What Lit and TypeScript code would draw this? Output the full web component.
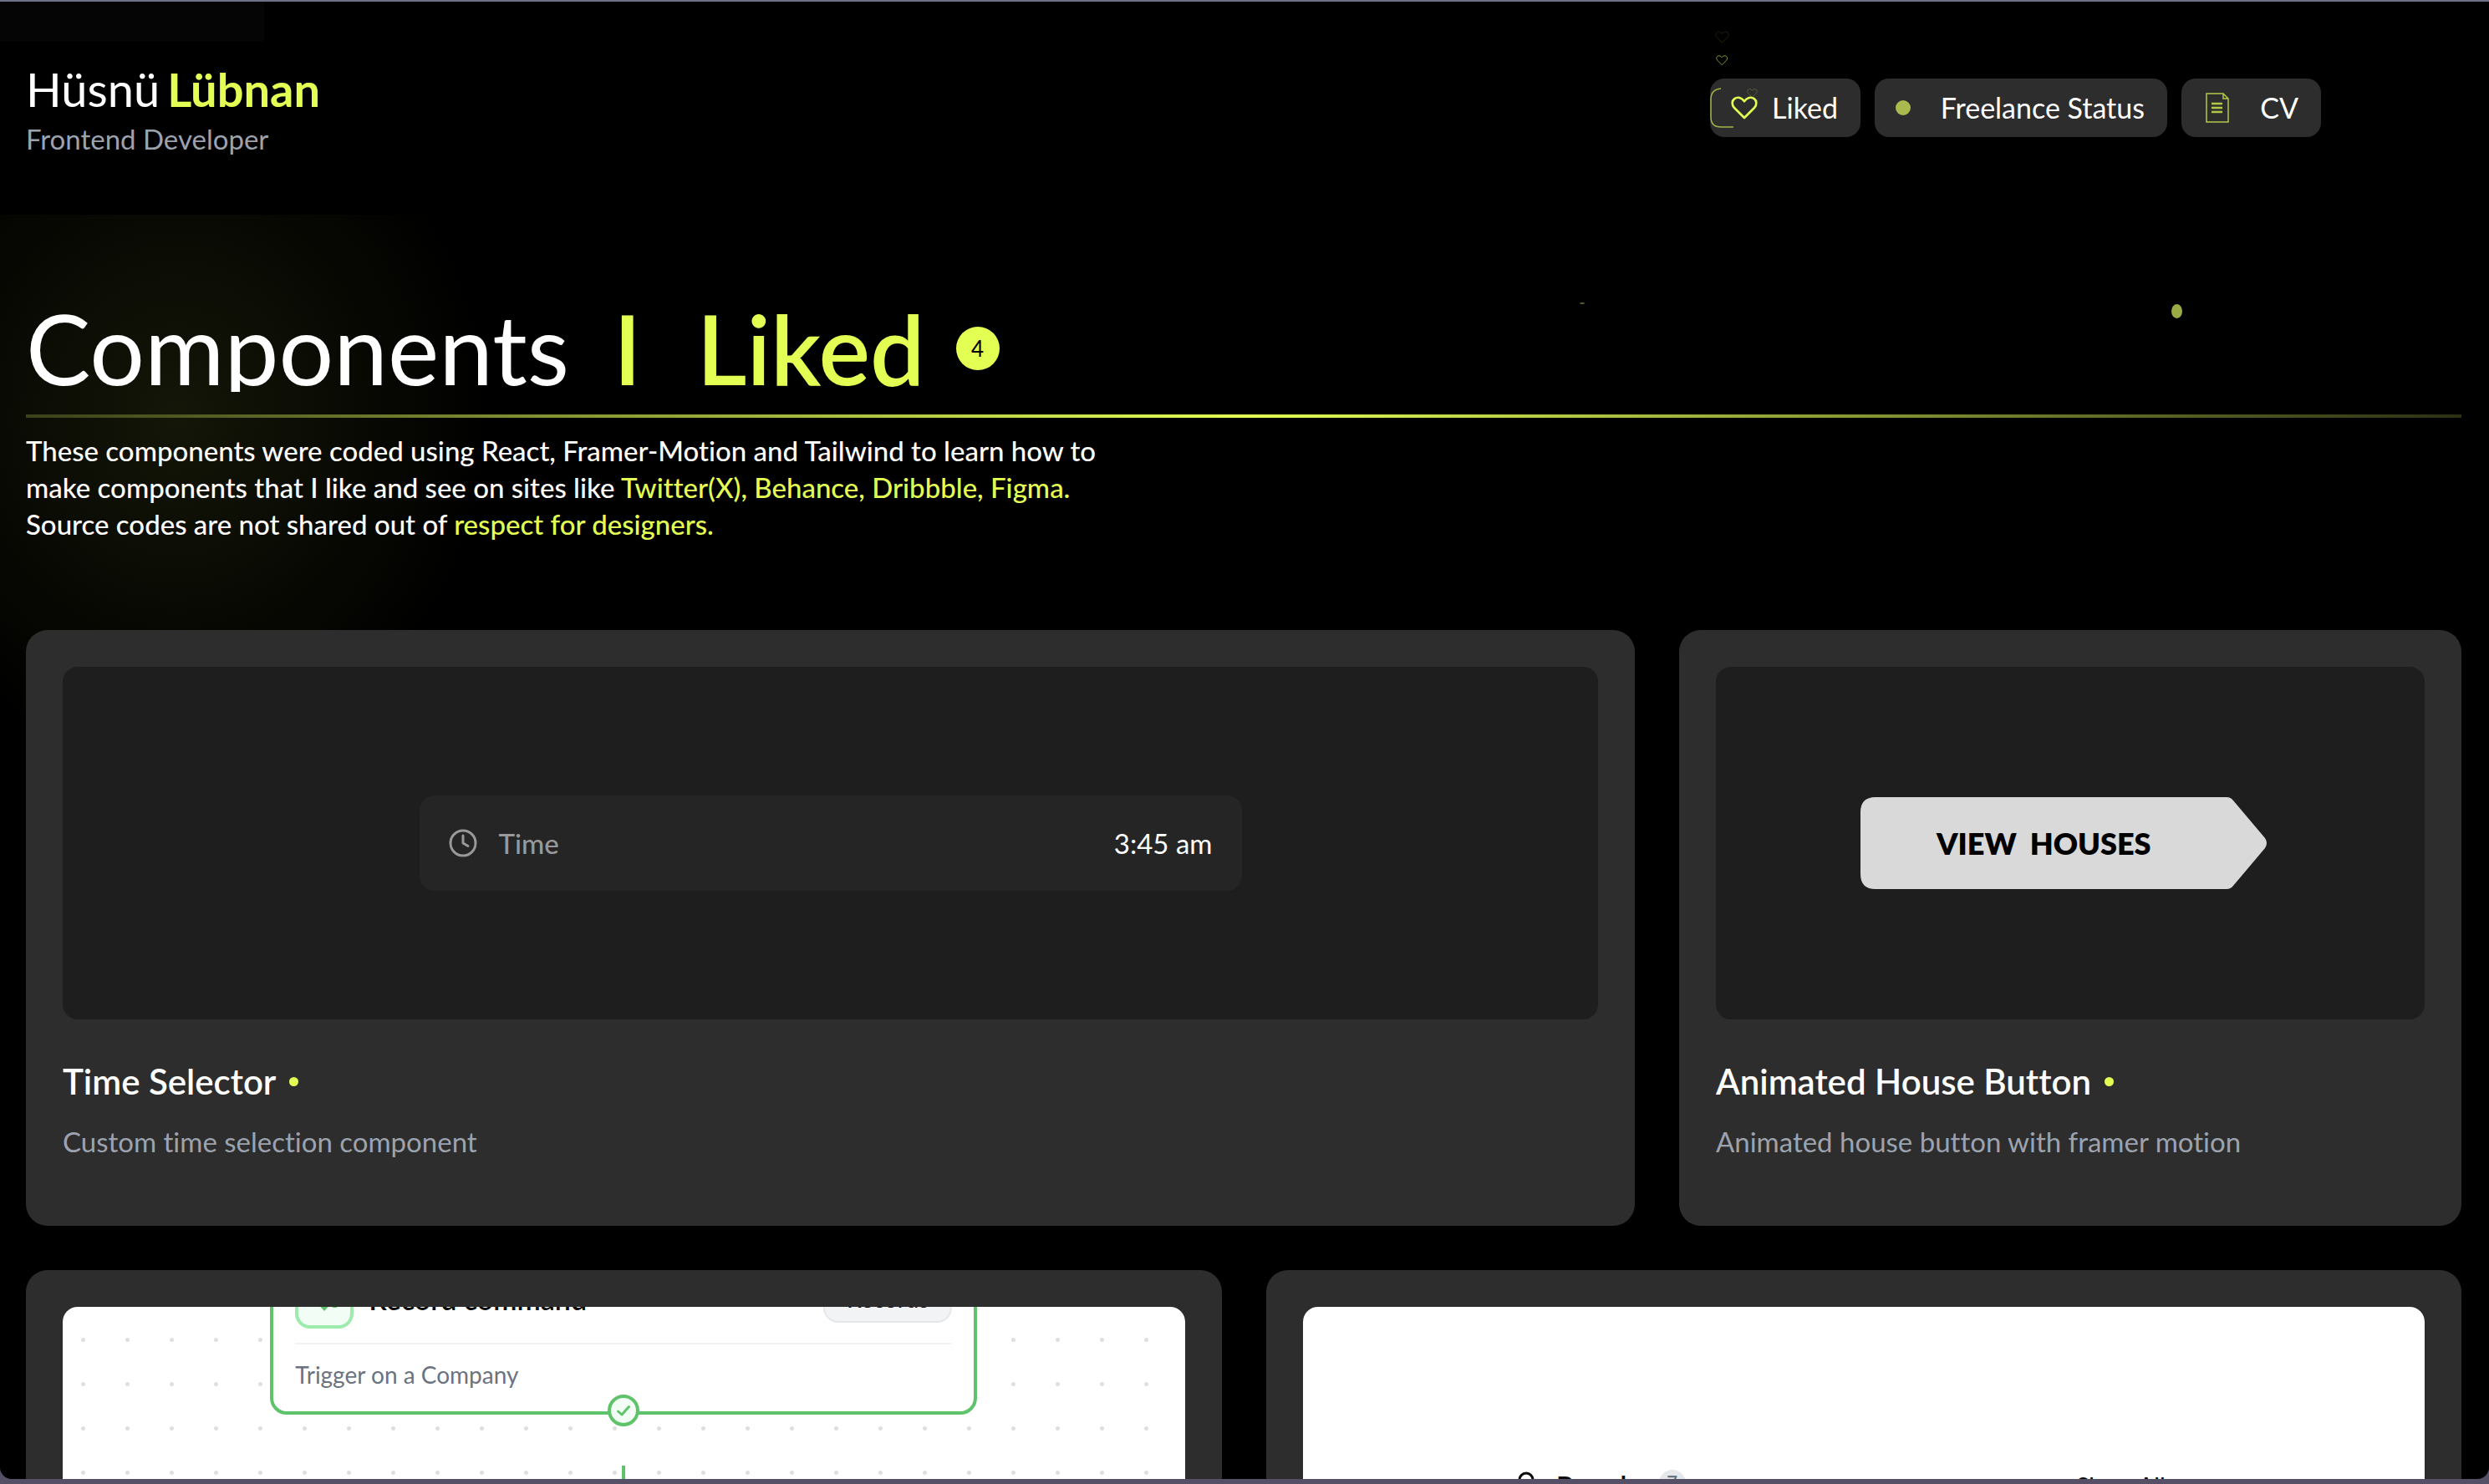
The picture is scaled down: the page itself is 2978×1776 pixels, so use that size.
import { LitElement, html, css, svg } from "lit";
import { customElement, property } from "lit/decorators.js";

const heart = svg`<path d="M12 21 L3 12 C0.5 9.300 0.800 5.600 3.200 3.900 C6 1.900 9.600 2.800 12 6.200 C14.400 2.800 18 1.900 20.800 3.900 C23.200 5.600 23.500 9.300 21 12 Z" />`;

@customElement("project-card")
class ProjectCard extends LitElement {
  @property() name = "";
  @property() summary = "";
  @property({ type: Boolean, reflect: true }) light = false;

  static styles = css`
    :host {
      display: block;
      box-sizing: border-box;
      padding: 44px;
      border-radius: 26px;
      background: #2d2d2d;
      color: #fff;
    }
    .preview {
      height: 422px;
      display: flex;
      flex-direction: column;
      align-items: center;
      justify-content: center;
      overflow: hidden;
      border-radius: 18px;
      background: #1e1e1e;
    }
    :host([light]) .preview {
      justify-content: flex-start;
      background: #fff;
    }
    .title {
      display: flex;
      align-items: center;
      gap: 16px;
      margin: 48px 0 0;
      font-size: 42px;
      line-height: 52px;
      font-weight: 600;
    }
    .dot {
      width: 11px;
      height: 11px;
      border-radius: 50%;
      background: #e4ff54;
    }
    .summary {
      margin: 26px 0 0;
      font-size: 33px;
      line-height: 40px;
      color: #9ca3af;
    }
    .body {
      padding-bottom: 37px;
    }
  `;

  render() {
    return html`
      <div class="preview"><slot></slot></div>
      <div class="body">
        <h2 class="title">${this.name}<span class="dot"></span></h2>
        <p class="summary">${this.summary}</p>
      </div>
    `;
  }
}

@customElement("time-field")
class TimeField extends LitElement {
  static styles = css`
    :host {
      display: block;
      width: 984px;
      max-width: 100%;
    }
    .field {
      display: flex;
      align-items: center;
      gap: 26px;
      width: 100%;
      height: 114px;
      padding: 0 35px;
      border: 0;
      border-radius: 18px;
      background: #252525;
      color: #999;
      font: inherit;
      font-size: 33px;
      text-align: left;
    }
    .clock {
      width: 34px;
      height: 34px;
      fill: none;
      stroke: currentColor;
      stroke-width: 3;
      stroke-linecap: round;
      stroke-linejoin: round;
    }
    .label {
      flex: 1;
      font-weight: 500;
    }
    .value {
      color: #fff;
    }
  `;

  render() {
    return html`
      <button class="field" type="button">
        <svg class="clock" viewBox="0 0 34 34" aria-hidden="true">
          <circle cx="17" cy="17" r="15" />
          <path d="M17 8 V17 L23 20.500" />
        </svg>
        <span class="label">Time</span>
        <span class="value">3:45 am</span>
      </button>
    `;
  }
}

@customElement("house-button")
class HouseButton extends LitElement {
  static styles = css`
    :host {
      display: block;
      padding-right: 16px;
    }
    .house {
      display: grid;
      align-items: center;
      padding: 0;
      border: 0;
      background: none;
      color: #000;
      font: inherit;
    }
    .shape,
    .label {
      grid-area: 1 / 1;
    }
    .shape {
      width: 486px;
      height: 110px;
      fill: #d9d9d9;
    }
    .label {
      display: flex;
      gap: 16px;
      padding-left: 91px;
      font-size: 36px;
      font-weight: 800;
    }
  `;

  render() {
    return html`
      <button class="house" type="button">
        <svg class="shape" viewBox="0 0 486 110" aria-hidden="true">
          <path d="M18 0 H438 Q443 0 446 4 L484 49 Q488 55 484 61 L446 106 Q443 110 438 110 H18 Q0 110 0 92 V18 Q0 0 18 0 Z" />
        </svg>
        <span class="label"><span>VIEW</span><span>HOUSES</span></span>
      </button>
    `;
  }
}

@customElement("flow-preview")
class FlowPreview extends LitElement {
  static styles = css`
    :host {
      display: flex;
      flex-direction: column;
      align-items: center;
      align-self: stretch;
      height: 100%;
      background-image: radial-gradient(circle, #dfdfdf 2px, transparent 3px);
      background-size: 53px 53px;
      background-position: -2px 13px;
      color: #0c0c0e;
    }
    .node {
      position: relative;
      box-sizing: border-box;
      width: 846px;
      margin-top: -74px;
      padding: 26px 26px 24px;
      border: 4px solid #5fc36b;
      border-radius: 20px;
      background: #fff;
    }
    .head {
      display: flex;
      align-items: center;
      gap: 18px;
      padding-bottom: 17px;
      border-bottom: 2px solid #f2f2f3;
    }
    .tile {
      box-sizing: border-box;
      width: 70px;
      height: 70px;
      border: 4px solid #9eebae;
      border-radius: 18px;
      background: #f2fdf5;
      fill: #5fc36b;
    }
    .name {
      flex: 1;
      font-size: 34px;
      line-height: 44px;
      font-weight: 600;
    }
    .chip {
      box-sizing: border-box;
      width: 154px;
      height: 56px;
      border: 2px solid #e5e7eb;
      border-radius: 18px;
      background: #f2f3f5;
      font-size: 28px;
      line-height: 50px;
      text-align: center;
      font-weight: 500;
    }
    .hint {
      margin: 16px 0 0;
      font-size: 28px;
      line-height: 40px;
      color: #6b7280;
    }
    .check {
      position: absolute;
      left: 50%;
      bottom: -18px;
      width: 38px;
      height: 38px;
      margin-left: -19px;
      fill: #f2fdf5;
      stroke: #5fc36b;
      stroke-linecap: round;
      stroke-linejoin: round;
    }
    .wire {
      width: 4px;
      flex: 1;
      margin-top: 61px;
      background: #5fc36b;
    }
  `;

  render() {
    return html`
      <div class="node">
        <div class="head">
          <svg class="tile" viewBox="0 0 62 62" aria-hidden="true">
            <path d="M31 18 L42 33 L31 45 L20 33 Z" />
            <rect x="41" y="38" width="5" height="3" />
          </svg>
          <span class="name">Record command</span>
          <span class="chip">Records</span>
        </div>
        <p class="hint">Trigger on a Company</p>
        <svg class="check" viewBox="0 0 38 38" aria-hidden="true">
          <circle cx="19" cy="19" r="17" stroke-width="4" />
          <path d="M12.500 20 L17 24 L25.500 14.500" fill="none" stroke-width="3" />
        </svg>
      </div>
      <div class="wire"></div>
    `;
  }
}

@customElement("people-preview")
class PeoplePreview extends LitElement {
  static styles = css`
    :host {
      display: block;
      box-sizing: border-box;
      width: 840px;
      max-width: 100%;
      padding-top: 192px;
      color: #0c0c0e;
    }
    .bar {
      display: flex;
      align-items: center;
      height: 44px;
      font-size: 34px;
      font-weight: 600;
    }
    .person {
      width: 32px;
      height: 36px;
      margin-right: 20px;
      fill: none;
      stroke: currentColor;
      stroke-width: 3;
    }
    .count {
      width: 32px;
      height: 32px;
      margin: 0 auto 6px 20px;
      border-radius: 50%;
      background: #e5e7eb;
      color: #6b7280;
      font-size: 22px;
      line-height: 32px;
      text-align: center;
    }
    .all {
      padding: 0;
      border: 0;
      margin-right: 59px;
      background: none;
      color: inherit;
      font: inherit;
      font-size: 28px;
      font-weight: 500;
    }
  `;

  render() {
    return html`
      <div class="bar">
        <svg class="person" viewBox="0 0 32 36" aria-hidden="true">
          <circle cx="16" cy="11" r="8" />
          <path d="M3 34 C3 26 8 22 16 22 C24 22 29 26 29 34" />
        </svg>
        <span>People</span>
        <span class="count">7</span>
        <button class="all" type="button">Show All</button>
      </div>
    `;
  }
}

@customElement("app-root")
class AppRoot extends LitElement {
  static styles = css`
    :host {
      display: block;
      box-sizing: border-box;
      height: 100vh;
      padding: 2px 0 6px;
      background: linear-gradient(#6e7186 50%, #555066 50%);
      font-family: Lato, "Liberation Sans", sans-serif;
      font-variant-ligatures: none;
      color: #fff;
    }
    .page {
      position: relative;
      height: 100%;
      overflow: hidden;
      border-radius: 0 0 14px 14px;
      background: #000;
    }
    .tint {
      position: absolute;
      top: 0;
      left: 0;
      width: 316px;
      height: 48px;
      background: #050505;
    }
    .glow {
      position: absolute;
      top: 255px;
      left: 0;
      width: 620px;
      height: 640px;
      background: radial-gradient(ellipse 380px 420px at 210px 240px, #141608, #0b0c04 45%, #000);
    }
    .fleck {
      position: absolute;
      border-radius: 50%;
      background: #9aaa44;
    }
    .fleck-a {
      top: 362px;
      left: 2598px;
      width: 13px;
      height: 17px;
    }
    .fleck-b {
      top: 360px;
      left: 1890px;
      width: 6px;
      height: 2px;
      opacity: 0.6;
    }
    .header {
      position: relative;
      display: flex;
      align-items: center;
      justify-content: space-between;
      padding: 72px 201px 0 31px;
    }
    .brand {
      display: flex;
      gap: 9px;
      margin: 0;
      font-size: 56px;
      line-height: 66px;
    }
    .brand .last {
      color: #e4ff54;
      font-weight: 700;
    }
    .role {
      margin: 6px 0 0;
      font-size: 33px;
      line-height: 40px;
      color: #9ca3af;
    }
    .nav {
      display: flex;
      gap: 17px;
      padding-bottom: 2px;
    }
    .pill {
      position: relative;
      display: flex;
      align-items: center;
      justify-content: space-between;
      box-sizing: border-box;
      height: 70px;
      padding: 0 27px 0 25px;
      border-radius: 17px;
      background: #2d2d2d;
      color: #fff;
      font-size: 34px;
      line-height: 40px;
      text-decoration: none;
    }
    .pill-liked {
      width: 180px;
    }
    .pill-status {
      width: 350px;
    }
    .pill-cv {
      width: 167px;
    }
    .heart {
      width: 32px;
      height: 32px;
      fill: none;
      stroke: #e4ff54;
      stroke-width: 2;
      stroke-linejoin: round;
    }
    .trail {
      position: absolute;
      left: 0;
      top: -64px;
      width: 64px;
      height: 128px;
      fill: none;
      stroke: #e4ff54;
    }
    .status {
      width: 18px;
      height: 18px;
      border-radius: 50%;
      background: #aaba4d;
    }
    .doc {
      width: 36px;
      height: 36px;
      fill: none;
      stroke: #b4c748;
    }
    .main {
      position: relative;
      padding: 179px 33px 0 31px;
    }
    .heading {
      display: flex;
      align-items: center;
      margin: 0;
      font-size: 116px;
      line-height: 104px;
      font-weight: 400;
    }
    .heading .plain {
      overflow: hidden;
    }
    .heading .hot {
      margin-left: 53px;
      color: #e4ff54;
      font-weight: 600;
    }
    .heading .wide {
      margin-left: 66px;
    }
    .badge {
      width: 52px;
      height: 52px;
      margin-left: 37px;
      border-radius: 50%;
      background: #e4ff54;
      color: #000;
      font-size: 26px;
      line-height: 52px;
      text-align: center;
    }
    .rule {
      height: 4px;
      margin: 27px 0 0;
      border: 0;
      background: linear-gradient(90deg, #3b411a, #e4ff54 50%, #2b3014);
    }
    .intro {
      margin: 17px 0 105px;
      font-size: 33px;
      line-height: 44px;
      font-weight: 500;
    }
    .intro em {
      color: #e4ff54;
      font-style: normal;
    }
    .grid {
      display: grid;
      grid-template-columns: repeat(6, minmax(0, 1fr));
      gap: 53px;
    }
    .span-4 {
      grid-column: span 4;
    }
    .span-3 {
      grid-column: span 3;
    }
    .span-2 {
      grid-column: span 2;
    }
  `;

  render() {
    return html`
      <div class="page">
        <div class="tint"></div>
        <div class="glow"></div>
        <div class="fleck fleck-a"></div>
        <div class="fleck fleck-b"></div>
        <header class="header">
          <div>
            <p class="brand"><span>Hüsnü</span> <span class="last">Lübnan</span></p>
            <p class="role">Frontend Developer</p>
          </div>
          <nav class="nav">
            <a class="pill pill-liked" href="#liked">
              <svg class="heart" viewBox="0 0 24 24" aria-hidden="true">${heart}</svg>
              Liked
              <svg class="trail" viewBox="0 0 64 128" aria-hidden="true">
                <g transform="translate(6 6) scale(0.710)" opacity="0.1" stroke-width="1.500">${heart}</g>
                <g transform="translate(7 35) scale(0.600)" opacity="0.6" stroke-width="1.600">${heart}</g>
                <g transform="translate(44 75) scale(0.540)" opacity="0.25" stroke-width="1.600">${heart}</g>
                <path d="M13 76 Q1 77 1 89 V110 Q1 122 13 122 H28" opacity="0.65" stroke-width="1.500" />
              </svg>
            </a>
            <a class="pill pill-status" href="#status"><span class="status"></span>Freelance Status</a>
            <a class="pill pill-cv" href="#cv">
              <svg class="doc" viewBox="0 0 36 36" aria-hidden="true">
                <path d="M5 1 H25 L31 7 V35 H5 Z M25 1 V7 H31" stroke-width="1.500" />
                <path d="M11 13 H24 M11 18 H24 M11 23 H24" stroke-width="2.500" />
              </svg>
              CV
            </a>
          </nav>
        </header>
        <main class="main">
          <h1 class="heading">
            <span class="plain">Components</span><span class="hot">I</span><span class="hot wide">Liked</span>
            <span class="badge">4</span>
          </h1>
          <hr class="rule" />
          <p class="intro">
            These components were coded using React, Framer-Motion and Tailwind to learn how to<br />
            make components that I like and see on sites like
            <em>Twitter(X), Behance, Dribbble, Figma.</em><br />
            Source codes are not shared out of <em>respect for designers.</em>
          </p>
          <section class="grid">
            <project-card class="span-4" name="Time Selector" summary="Custom time selection component">
              <time-field></time-field>
            </project-card>
            <project-card
              class="span-2"
              name="Animated House Button"
              summary="Animated house button with framer motion"
            >
              <house-button></house-button>
            </project-card>
            <project-card class="span-3" light><flow-preview></flow-preview></project-card>
            <project-card class="span-3" light><people-preview></people-preview></project-card>
          </section>
        </main>
      </div>
    `;
  }
}
